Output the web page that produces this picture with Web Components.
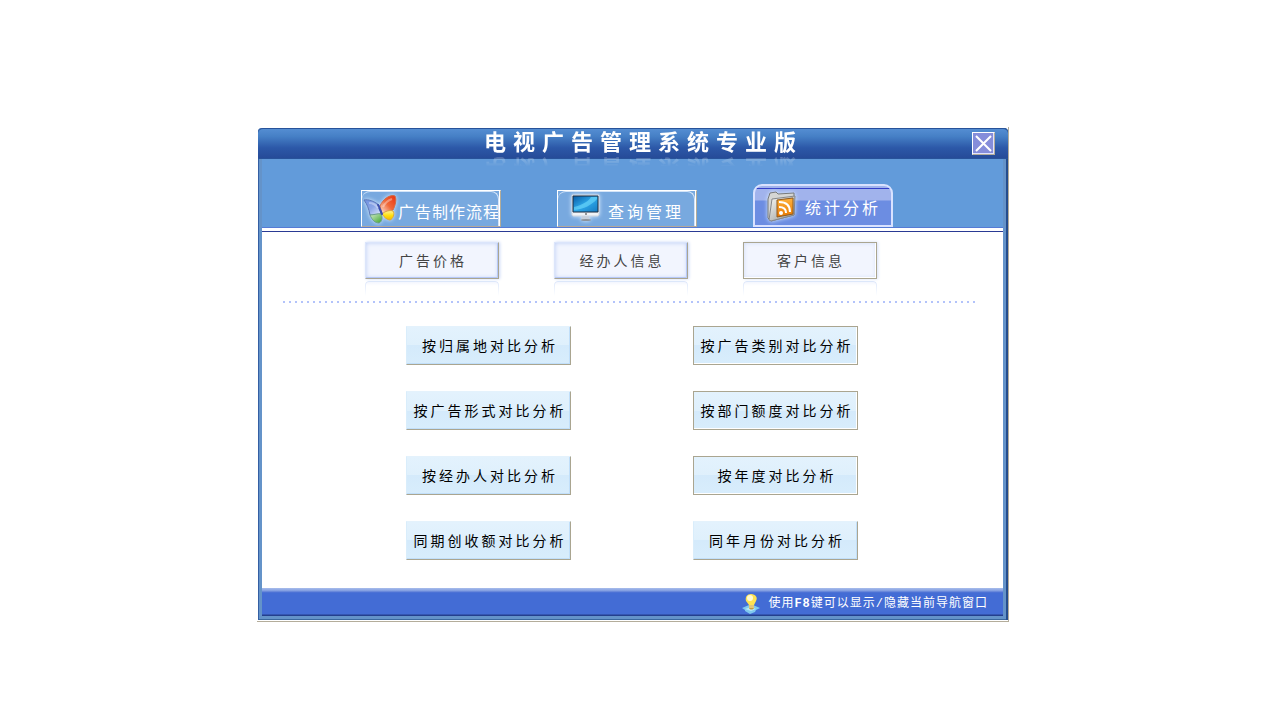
<!DOCTYPE html>
<html lang="zh-CN">
<head>
<meta charset="utf-8">
<meta name="viewport" content="width=device-width, initial-scale=1">
<title>电视广告管理系统专业版</title>
<style>
  body {
    margin: 0;
    padding: 127px 14px 24px 0;
    background: #fff;
    font-family: "Liberation Sans", "Noto Sans CJK SC", sans-serif;
  }
</style>
</head>
<body>
<app-window>
  <title-bar slot="header">电视广告管理系统专业版</title-bar>
  <tab-bar slot="tabs">
    <nav-tab icon="butterfly" tight>广告制作流程</nav-tab>
    <nav-tab icon="monitor">查询管理</nav-tab>
    <nav-tab icon="folder" active>统计分析</nav-tab>
  </tab-bar>
  <sub-menu>
    <sub-button>广告价格</sub-button>
    <sub-button>经办人信息</sub-button>
    <sub-button etched>客户信息</sub-button>
  </sub-menu>
  <action-grid>
    <action-button>按归属地对比分析</action-button>
    <action-button etched>按广告类别对比分析</action-button>
    <action-button>按广告形式对比分析</action-button>
    <action-button etched>按部门额度对比分析</action-button>
    <action-button>按经办人对比分析</action-button>
    <action-button etched>按年度对比分析</action-button>
    <action-button>同期创收额对比分析</action-button>
    <action-button>同年月份对比分析</action-button>
  </action-grid>
  <status-bar slot="footer">使用<b>F8</b>键可以显示/隐藏当前导航窗口</status-bar>
</app-window>

<script>
const define = (name, html) => {
  const template = document.createElement('template');
  template.innerHTML = html;
  customElements.define(name, class extends HTMLElement {
    constructor() {
      super();
      this.attachShadow({ mode: 'open' }).append(template.content.cloneNode(true));
    }
  });
};

const icons = {
  butterfly: `<svg viewBox="0 0 36 34" width="36" height="34" aria-hidden="true">
    <defs>
      <linearGradient id="bl" x1="0" y1="0" x2="1" y2="1"><stop offset="0" stop-color="#6d8fe0"/><stop offset=".5" stop-color="#8ba6e6"/><stop offset="1" stop-color="#e3ecff"/></linearGradient>
      <linearGradient id="rd" x1="1" y1="0" x2="0" y2="1"><stop offset="0" stop-color="#e9300e"/><stop offset=".5" stop-color="#f0693a"/><stop offset="1" stop-color="#fff3e8"/></linearGradient>
      <linearGradient id="yl" x1="0" y1="0" x2="0" y2="1"><stop offset="0" stop-color="#fff3a0"/><stop offset=".5" stop-color="#ffe112"/><stop offset="1" stop-color="#f2b900"/></linearGradient>
      <linearGradient id="gr" x1="0" y1="0" x2="1" y2="1"><stop offset="0" stop-color="#d5eecb"/><stop offset="1" stop-color="#3da42c"/></linearGradient>
    </defs>
    <path d="M2 8c4-1 10 1 15 5l2 9c-4 0-8 2-11 1C7 17 5 12 2 8Z" fill="url(#bl)" stroke="#5b78b8"/>
    <path d="M8 23c4 0 8-2 11-1 2 3 1 8-2 9-4 0-7-3-9-8Z" fill="url(#gr)" stroke="#6b9d8a"/>
    <path d="M18 14C21 7 28 2 33 4c2 4 0 10-2 14l-11 4Z" fill="url(#rd)" stroke="#cf6a44"/>
    <path d="M20 22c3-3 8-4 11-3 2 3 0 8-3 9-3 0-6-3-8-6Z" fill="url(#yl)" stroke="#d9a839"/>
    <path d="M16 13l4 9" stroke="#3a4fae" stroke-width="2" stroke-linecap="round"/>
    <path d="M7 11c4 0 7 2 9 5M21 15c2-4 6-7 9-8" fill="none" stroke="#fff" stroke-opacity=".35" stroke-width="2"/>
  </svg>`,
  monitor: `<svg viewBox="0 0 36 34" width="36" height="34" aria-hidden="true">
    <defs>
      <linearGradient id="sc" x1="0" y1="0" x2="1" y2="1"><stop offset="0" stop-color="#075aa5"/><stop offset=".5" stop-color="#2da8e9"/><stop offset="1" stop-color="#1579c1"/></linearGradient>
    </defs>
    <path d="M14 24h7l1 4H13Z" fill="#c7cfda"/>
    <ellipse cx="18" cy="28" rx="5" ry="1" fill="#8b939c"/>
    <path d="M4 3h27v20l-1 1H5l-1-1Z" fill="#f0f3f7" stroke="#cbd3df"/>
    <path d="M5 4h25v16H5Z" fill="url(#sc)" stroke="#1c2c40"/>
    <path d="M6 15C14 13 21 9 23 5h6v2C24 13 16 17 6 18Z" fill="#7ee5ff" opacity=".5"/>
    <circle cx="18" cy="22" r="1" fill="#777"/>
  </svg>`,
  folder: `<svg viewBox="0 0 36 34" width="36" height="34" aria-hidden="true">
    <defs>
      <linearGradient id="fd" x1="0" y1="0" x2="1" y2="1"><stop offset="0" stop-color="#fbfbf8"/><stop offset=".6" stop-color="#b8bab8"/><stop offset="1" stop-color="#9a9c9c"/></linearGradient>
      <linearGradient id="rs" x1="0" y1="0" x2="0" y2="1"><stop offset="0" stop-color="#ffb33e"/><stop offset="1" stop-color="#e97900"/></linearGradient>
    </defs>
    <path d="M3 29V10l2-6 6-1 2 2 16-1v22L6 32Z" fill="#d5d6d4" stroke="#77797a"/>
    <path d="M4 31l3-21 23-3-1 19-23 6Z" fill="url(#fd)" stroke="#85878a"/>
    <path d="M12 11l16-2v16l-16 3Z" fill="url(#rs)" stroke="#8f5a20"/>
    <circle cx="16" cy="24" r="2" fill="#fff"/>
    <path d="M14 18c5 0 7 2 7 6M14 13c8 0 11 4 11 10" fill="none" stroke="#fff" stroke-width="2"/>
  </svg>`
};

define('app-window', `
  <style>
    :host { display: block; box-sizing: border-box; width: 100%; max-width: 752px; margin: 0 auto;
      padding: 1px 0 1px 1px; border: solid #b4ad9b; border-width: 0 1px 1px 0; }
    .shell { background: #6493c9; border-radius: 4px 4px 0 0;
      box-shadow: inset 1px 0 #345fa3, inset -2px 0 #244d8e, inset 0 -1px #3a689e; }
    .frame { border: solid transparent; border-width: 0 5px 4px 4px; background: #fff; background-clip: padding-box; }
    main { min-height: 356px; box-sizing: border-box; padding: 10px 21px 0 20px; }
  </style>
  <div class="shell">
    <slot name="header"></slot>
    <div class="frame">
      <slot name="tabs"></slot>
      <main><slot></slot></main>
      <slot name="footer"></slot>
    </div>
  </div>`);

define('title-bar', `
  <style>
    :host { display: grid; grid-template-columns: 1fr auto 1fr; align-items: center; position: relative; z-index: 1;
      box-sizing: border-box; height: 31px; padding: 0 13px 0 0; color: #fff;
      border: solid #28539a; border-width: 1px 0; border-radius: 5px 5px 0 0;
      background: linear-gradient(#548dd2, #4680c6 25%, #2c58a8 65%, #264b98); }
    h1 { grid-column: 2; margin: 0; padding: 0 0 2px 34px; font-size: 22px; line-height: 25px; font-weight: 700; letter-spacing: 7px; white-space: nowrap;
      -webkit-box-reflect: below -4px linear-gradient(transparent 50%, rgba(255,255,255,.35)); }
    button { justify-self: end; display: grid; place-items: center; width: 23px; height: 23px; padding: 0;
      background: #858dda; border: 1px solid; border-color: #fff #b3ac99 #b3ac99 #fff; box-shadow: inset -1px -1px #dfe2ff; }
  </style>
  <h1><slot></slot></h1>
  <button type="button" aria-label="关闭"><svg width="17" height="17" viewBox="0 0 17 17" aria-hidden="true"><path d="M1 1l15 15M16 1L1 16" stroke="#fff" stroke-width="2"/></svg></button>`);

define('tab-bar', `
  <style>
    :host { display: block; border-bottom: 1px solid #2a3a94; background: #fff; padding-bottom: 3px; }
    nav { display: flex; justify-content: center; align-items: flex-end; gap: 56px; box-sizing: border-box;
      height: 69px; padding-right: 11px; background: #629bda; border-bottom: 1px solid #557bd6; }
  </style>
  <nav><slot></slot></nav>`);

customElements.define('nav-tab', class extends HTMLElement {
  constructor() {
    super();
    this.attachShadow({ mode: 'open' }).innerHTML = `
      <style>
        :host { display: block; width: 140px; }
        button { position: relative; display: flex; align-items: center; gap: 4px; width: 100%; height: 37px; padding: 0 0 0 10px; box-sizing: border-box;
          font: 16px/24px "Noto Sans CJK SC", sans-serif; letter-spacing: 3px; color: #fff; white-space: nowrap;
          background: #78a9df; border: 1px solid; border-color: #fff #b3ac99 #b3a89a #fff; border-radius: 0;
          box-shadow: inset -1px 0 #fff; }
        button::before { content: ""; position: absolute; inset: 0 1px 0 0; border: solid #d3e4f8; border-width: 1px 1px 0 0;
          border-radius: 8px 8px 0 0; border-color: #d3e4f8 #d3e4f8 transparent transparent; }
        svg { flex: none; filter: drop-shadow(0 0 2px #d8ecff); }
        span { padding-top: 4px; }
        :host([tight]) button { gap: 0; padding-left: 0; letter-spacing: 1px; }
        :host([active]) button { height: 43px; border: 2px solid #d9e2ff; border-radius: 9px 9px 0 0; box-shadow: none;
          background: linear-gradient(transparent 2px, #3540c8 2px, #3540c8 3px, transparent 3px), linear-gradient(#a1b3ec 14px, #6c8de2 15px); }
        :host([active]) button::before { display: none; }
        :host([active]) span { padding-top: 2px; }
      </style>
      <button type="button">${icons[this.getAttribute('icon')]}<span><slot></slot></span></button>`;
  }
});

define('sub-menu', `
  <style>
    :host { display: block; }
    nav { display: flex; justify-content: center; gap: 55px; height: 59px; padding-right: 23px; }
    hr { height: 2px; margin: 0 7px 0 1px; border: 0; background: repeating-linear-gradient(90deg, #b3c3fa 0 2px, transparent 2px 6px); }
  </style>
  <nav><slot></slot></nav><hr>`);

define('sub-button', `
  <style>
    :host { display: block; width: 134px; }
    button { display: block; width: 100%; height: 37px; padding: 0 0 1px 3px; font: 14px/20px "Noto Sans CJK SC", sans-serif; letter-spacing: 3px;
      color: #444; white-space: nowrap; background: #f2f5fe; border: 1px solid; border-color: #dbe5fb #aaa590 #aaa590 #dce5fa;
      box-shadow: inset 0 0 4px #bccdf5, inset -1px -1px #b2c5f8, 1px 0 3px #cbd8f8; }
    :host([etched]) button { border-color: #aaa590; box-shadow: inset -1px -1px #fff, inset 0 0 4px #cfdbf7, 1px 0 3px #d5dff8; }
    div { height: 14px; margin-top: 2px; border-radius: 4px 4px 0 0; border: solid #dbe6fa; border-width: 1px 1px 0;
      -webkit-mask: linear-gradient(#000, transparent); mask: linear-gradient(#000, transparent); background: linear-gradient(#f2f5fe, #fff 4px); }
  </style>
  <button type="button"><slot></slot></button><div></div>`);

define('action-grid', `
  <style>
    :host { display: grid; grid-template-columns: 165px 165px; justify-content: center; gap: 26px 122px; padding-top: 23px; }
  </style>
  <slot></slot>`);

define('action-button', `
  <style>
    :host { display: block; }
    button { display: block; width: 100%; height: 39px; padding: 0 0 2px 3px; font: 14px/20px "Noto Sans CJK SC", sans-serif; letter-spacing: 3px;
      color: #000; white-space: nowrap; border: 1px solid; border-color: #e4f2fc #aaa590 #aaa590 #d9edfb;
      background: linear-gradient(#e3f2fd, #dff0fc 50%, #d4eafb 50%, #d8edfc); box-shadow: inset -1px -1px #c1dffa; }
    :host([etched]) button { border-color: #aaa590; box-shadow: inset -1px -1px #fff; }
  </style>
  <button type="button"><slot></slot></button>`);

define('status-bar', `
  <style>
    :host { display: flex; align-items: center; justify-content: flex-end; gap: 7px; box-sizing: border-box; height: 28px; padding: 3px 15px 1px;
      color: #fff; font: 12px/16px "Liberation Mono", "Noto Sans CJK SC", monospace; letter-spacing: 1px;
      background: linear-gradient(#a9bdeb, #7e9be1 3px, #5577d5 4px, #436cd5 5px, #436cd5 26px, #243f8d 27px); }
    span { padding-top: 2px; }
  </style>
  <svg width="20" height="21" viewBox="0 0 20 21" aria-hidden="true">
    <path d="M1 15l7-3h4l7 3-4 2-1 2-5 2-5-3v-1Z" fill="#80c9ee"/>
    <path d="M4 16l6-2 5 2-5 2Z" fill="#b8e8fb"/>
    <path d="M8 10h5v5c-1 2-4 2-5 0Z" fill="#c39b3e"/>
    <path d="M8 12h5M8 14h5" stroke="#fff2b4"/>
    <path d="M10 1c5 0 7 4 5 7l-2 4H8L5 8C4 4 6 1 10 1Z" fill="#ffe252"/>
    <ellipse cx="9" cy="5" rx="3" ry="3" fill="#fffbd1"/>
  </svg>
  <span><slot></slot></span>`);
</script>
</body>
</html>
